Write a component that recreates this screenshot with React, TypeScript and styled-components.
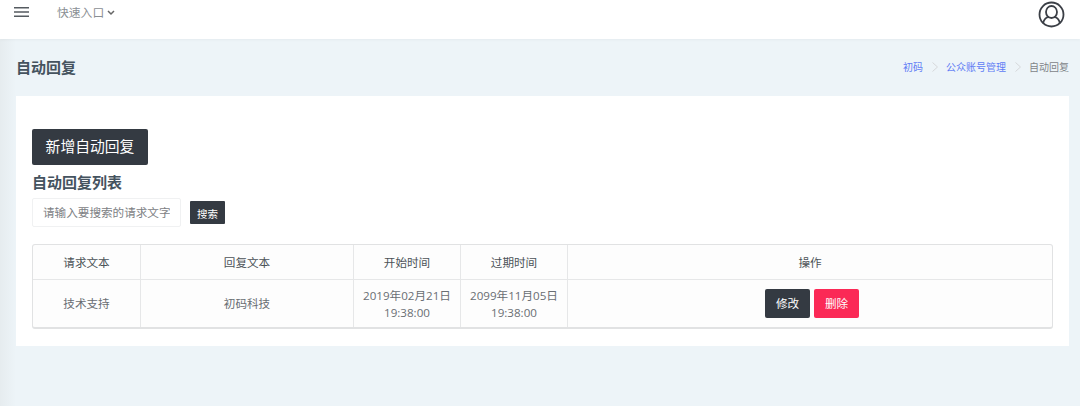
import React from 'react';
import styled, { createGlobalStyle } from 'styled-components';

const GlobalStyle = createGlobalStyle`
  html, body {
    margin: 0;
    padding: 0;
    height: 100%;
    background: #edf4f8;
    font-family: "Open Sans", "Noto Sans CJK SC", sans-serif;
  }
  * { box-sizing: border-box; }
`;

const Page = styled.div`
  width: 1080px;
  height: 406px;
  overflow: hidden;
  background: linear-gradient(90deg, #e6ecef 0, #edf4f8 16px);
`;

const TopBar = styled.header`
  height: 39px;
  background: #fff;
  box-shadow: 0 1px 3px rgba(0, 0, 0, 0.04);
  display: flex;
  align-items: flex-start;
  padding: 0 15px 0 14px;
`;

const MenuIcon = styled.svg`
  width: 15px;
  height: 10px;
  margin-top: 7px;
`;

const QuickLink = styled.div`
  display: flex;
  align-items: center;
  gap: 3px;
  margin: 4px 0 0 28px;
  font-size: 11.8px;
  line-height: 17px;
  color: #8a8f94;
`;

const UserIcon = styled.svg`
  width: 27px;
  height: 27px;
  margin: 1px 0 0 auto;
`;

const TitleRow = styled.div`
  height: 57px;
  display: flex;
  align-items: center;
  justify-content: space-between;
  padding: 0 11px 2px 16px;
`;

const PageTitle = styled.h1`
  margin: 0;
  font-size: 15px;
  font-weight: 700;
  color: #45535f;
`;

const Crumbs = styled.nav`
  display: flex;
  align-items: center;
  font-size: 10px;
  color: #7f8488;
`;

const CrumbLink = styled.a`
  color: #5f7cf5;
`;

const CrumbSep = styled.svg`
  width: 6px;
  height: 10px;
  margin: 0 8.5px;
`;

const Card = styled.main`
  margin: 0 11px 0 16px;
  height: 250px;
  background: #fff;
  padding: 33px 16px 0;
`;

const AddButton = styled.button`
  display: block;
  width: 116px;
  height: 36px;
  padding: 0 0 3px;
  border: 0;
  border-radius: 2px;
  background: #343a42;
  color: #fff;
  font: inherit;
  font-size: 14.8px;
`;

const ListTitle = styled.h2`
  margin: 8px 0 7px;
  font-size: 15px;
  line-height: 18px;
  font-weight: 700;
  color: #45535f;
`;

const SearchRow = styled.div`
  display: flex;
  align-items: center;
  gap: 9px;
`;

const SearchInput = styled.input`
  width: 149px;
  height: 29px;
  padding: 0 10px;
  border: 1px solid #f0f1f2;
  border-radius: 2px;
  font: inherit;
  font-size: 11.6px;
  color: #555;
  &::placeholder { color: #7d8184; opacity: 1; }
`;

const SearchButton = styled.button`
  width: 35px;
  height: 23px;
  padding: 1px 0 0;
  border: 0;
  border-radius: 1px;
  background: #343a42;
  color: #fff;
  font: inherit;
  font-size: 10.5px;
`;

const Table = styled.table`
  width: 1021px;
  height: 85px;
  margin-top: 17px;
  table-layout: fixed;
  border-collapse: separate;
  border-spacing: 0;
  border: 1px solid #e1e2e3;
  border-bottom-width: 2px;
  border-radius: 3px;
  background: #fdfdfd;
  font-size: 11.6px;
  text-align: center;
`;

const HeadCell = styled.th<{ $w?: number }>`
  width: ${p => (p.$w ? `${p.$w}px` : 'auto')};
  height: 35px;
  padding: 0;
  font-weight: 400;
  color: #4c5358;
  border-bottom: 1px solid #e6e7e8;
  border-right: 1px solid #e6e7e8;
  &:last-child { border-right: 0; }
`;

const Cell = styled.td`
  padding: 0;
  line-height: 17px;
  color: #696e73;
  border-right: 1px solid #e6e7e8;
  &:last-child { border-right: 0; }
`;

const Actions = styled.div`
  display: flex;
  justify-content: center;
  gap: 4px;
  padding-left: 4px;
`;

const ActionButton = styled.button<{ $danger?: boolean }>`
  width: 45px;
  height: 29px;
  padding: 0;
  border: 0;
  border-radius: 2px;
  background: ${p => (p.$danger ? '#fb2956' : '#343a42')};
  color: #fff;
  font: inherit;
  font-size: 11.6px;
`;

export default function App() {
  return (
    <Page>
      <GlobalStyle />
      <TopBar>
        <MenuIcon viewBox="0 0 15 10">
          <path d="M0 .7h15M0 5h15M0 9.3h15" stroke="#555b60" strokeWidth="1.4" fill="none" />
        </MenuIcon>
        <QuickLink>
          快速入口
          <svg width="8" height="6" viewBox="0 0 8 6">
            <path d="M1 1l3 3 3-3" stroke="#666" strokeWidth="1.5" fill="none" />
          </svg>
        </QuickLink>
        <UserIcon viewBox="0 0 27 27">
          <g stroke="#3b3f46" strokeWidth="1.8" fill="none">
            <circle cx="13.5" cy="13.5" r="12" />
            <ellipse cx="13.5" cy="11" rx="5.5" ry="6" />
            <path d="M5 22.5c.8-4 3.5-6.5 6-6.5M22 22.5c-.8-4-3.5-6.5-6-6.5" />
          </g>
        </UserIcon>
      </TopBar>
      <TitleRow>
        <PageTitle>自动回复</PageTitle>
        <Crumbs>
          <CrumbLink>初码</CrumbLink>
          <CrumbSep viewBox="0 0 6 10">
            <path d="M.5.5l5 4.500-5 4.500" stroke="#d5d8da" fill="none" />
          </CrumbSep>
          <CrumbLink>公众账号管理</CrumbLink>
          <CrumbSep viewBox="0 0 6 10">
            <path d="M.5.5l5 4.500-5 4.500" stroke="#d5d8da" fill="none" />
          </CrumbSep>
          自动回复
        </Crumbs>
      </TitleRow>
      <Card>
        <AddButton>新增自动回复</AddButton>
        <ListTitle>自动回复列表</ListTitle>
        <SearchRow>
          <SearchInput placeholder="请输入要搜索的请求文字" />
          <SearchButton>搜索</SearchButton>
        </SearchRow>
        <Table>
          <thead>
            <tr>
              <HeadCell $w={108}>请求文本</HeadCell>
              <HeadCell $w={213}>回复文本</HeadCell>
              <HeadCell $w={107}>开始时间</HeadCell>
              <HeadCell $w={107}>过期时间</HeadCell>
              <HeadCell>操作</HeadCell>
            </tr>
          </thead>
          <tbody>
            <tr>
              <Cell>技术支持</Cell>
              <Cell>初码科技</Cell>
              <Cell>2019年02月21日<br />19:38:00</Cell>
              <Cell>2099年11月05日<br />19:38:00</Cell>
              <Cell>
                <Actions>
                  <ActionButton>修改</ActionButton>
                  <ActionButton $danger>删除</ActionButton>
                </Actions>
              </Cell>
            </tr>
          </tbody>
        </Table>
      </Card>
    </Page>
  );
}
